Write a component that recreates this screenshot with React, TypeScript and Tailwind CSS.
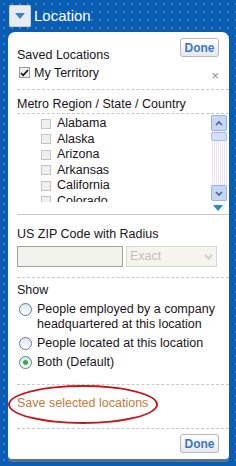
import { useState } from "react";

const states = ["Alabama", "Alaska", "Arizona", "Arkansas", "California", "Colorado"];

const DoneButton = () => (
  <button className="h-[19px] w-[39px] rounded-[3px] border border-[#b8b8b8] bg-[linear-gradient(#ffffff,#e6e9ee)] text-[12px] font-bold leading-none text-[#3a78c4]">
    Done
  </button>
);

const Radio = ({ checked }: { checked?: boolean }) => (
  <span className="mt-[1px] flex h-[13px] w-[13px] shrink-0 items-center justify-center rounded-full border border-[#5b7ba8] bg-[linear-gradient(#dfe4ea,#ffffff)]">
    {checked && <span className="h-[5px] w-[5px] rounded-full bg-[#2fae3c]" />}
  </span>
);

export default function App() {
  const [show] = useState(2);
  const options = [
    "People employed by a company headquartered at this location",
    "People located at this location",
    "Both (Default)",
  ];

  return (
    <div
      className="h-[466px] w-[236px] overflow-hidden bg-[#0a5db3] bg-[radial-gradient(#3088cf_0.7px,transparent_1px)] bg-[size:8px_8px] text-[12.5px] text-[#1b1320]"
      style={{ fontFamily: '"Liberation Sans", Arial, sans-serif' }}
    >
      {/* header */}
      <div className="flex h-[32px] items-center pl-[9px]">
        <div className="flex h-[22px] w-[22px] items-center justify-center rounded-[2px] bg-[#e8ebef] shadow-[inset_0_0_0_1px_#c9ced6]">
          <svg width="10" height="6" viewBox="0 0 10 6">
            <path d="M0 0h10L5 6z" fill="#2a86d6" />
          </svg>
        </div>
        <span className="ml-[3px] text-[15px] text-white">Location</span>
      </div>

      {/* panel */}
      <div className="ml-[8px] w-[221px] rounded-t-[7px] rounded-b-[4px] bg-white pb-[6px] pl-[9px] shadow-[0_3px_0_#57748f]">
        {/* saved */}
        <div className="relative pt-[16px]">
          <div className="absolute right-[10px] top-[6px]">
            <DoneButton />
          </div>
          <div className="leading-[15px]">Saved Locations</div>
          <div className="flex items-center gap-[4px] pl-[2px] leading-[16px]">
            <span className="flex h-[11px] w-[11px] items-center justify-center border border-[#9a9a9a] bg-[#eeeeee]">
              <svg width="9" height="8" viewBox="0 0 9 8">
                <path d="M1 4l2.2 2.3L8 1" stroke="#111" strokeWidth="1.6" fill="none" />
              </svg>
            </span>
            <span>My Territory</span>
            <span className="ml-auto mr-[10px] mt-[6px] text-[13px] leading-none text-[#8a8a8a]">×</span>
          </div>
          <div className="mt-[7px] border-t border-dashed border-[#c8c8c8]" />
        </div>

        {/* metro region */}
        <div className="pt-[7px]">
          <div className="leading-[15px]">Metro Region / State / Country</div>
          <div className="mt-[1px] border-t border-dashed border-[#c8c8c8]" />
          <div className="flex h-[88px] overflow-hidden pr-[2px]">
            <div className="flex-1 pl-[24px] pt-[2px]">
              {states.map((s) => (
                <div key={s} className="flex h-[15.5px] items-center gap-[6px]">
                  <span className="h-[10px] w-[10px] border border-[#c4c4c4] bg-[#f0f0f0]" />
                  <span>{s}</span>
                </div>
              ))}
            </div>
            <div className="mt-[1px] flex h-[86px] w-[16px] flex-col bg-[repeating-linear-gradient(90deg,#ffffff_0_1px,#e9e6f0_1px_2px)]">
              <div className="flex h-[16px] items-center justify-center rounded-[2px] border border-[#9cb4e0] bg-[#c6d6f7]">
                <svg width="8" height="5" viewBox="0 0 8 5">
                  <path d="M1 4l3-3 3 3" stroke="#4c5f86" strokeWidth="1.6" fill="none" />
                </svg>
              </div>
              <div className="mt-[1px] h-[9px] rounded-[2px] border border-[#a8bde6] bg-[#d4e0f8]" />
              <div className="flex-1" />
              <div className="flex h-[16px] items-center justify-center rounded-[2px] border border-[#9cb4e0] bg-[#c6d6f7]">
                <svg width="8" height="5" viewBox="0 0 8 5">
                  <path d="M1 1l3 3 3-3" stroke="#4c5f86" strokeWidth="1.6" fill="none" />
                </svg>
              </div>
            </div>
          </div>
          <div className="flex h-[12px] justify-end pr-[6px] pt-[3px]">
            <svg width="10" height="6" viewBox="0 0 10 6">
              <path d="M0 0h10L5 6z" fill="#2a86d6" />
            </svg>
          </div>
          <div className="border-t border-[#c8c8c8]" />
        </div>

        {/* zip */}
        <div className="pt-[12px]">
          <div className="leading-[15px]">US ZIP Code with Radius</div>
          <div className="mt-[4px] flex gap-[3px]">
            <div className="h-[21px] w-[106px] border border-[#a0a0a0] bg-[#f3f3ee]" />
            <div className="flex h-[21px] w-[91px] items-center justify-between border border-[#d6d6cc] bg-[#f5f5ee] px-[3px]">
              <span className="text-[#c0c0b8]">Exact</span>
              <svg width="9" height="9" viewBox="0 0 9 9">
                <path d="M1 3l3.5 3.5L8 3" stroke="#cfcfc6" strokeWidth="2" fill="none" />
              </svg>
            </div>
          </div>
          <div className="mt-[10px] border-t border-dashed border-[#c8c8c8]" />
        </div>

        {/* show */}
        <div className="pt-[5px]">
          <div className="leading-[15px]">Show</div>
          <div className="mt-[4px] flex flex-col gap-[4px] pl-[2px]">
            {options.map((o, i) => (
              <div key={o} className="flex gap-[5px] leading-[15px]">
                <Radio checked={i === show} />
                <span className="w-[185px]">{o}</span>
              </div>
            ))}
          </div>
          <div className="mt-[14px] border-t border-dashed border-[#c8c8c8]" />
        </div>

        {/* save */}
        <div className="relative h-[43px]">
          <div className="absolute left-[-9px] top-[0px] h-[39px] w-[150px] rounded-[50%] border-[2px] border-[#c8161b]" />
          <div className="pt-[11px] leading-[15px] text-[#c57a3a]">Save selected locations</div>
        </div>
        <div className="border-t border-dashed border-[#c8c8c8]" />
        <div className="flex justify-end pr-[10px] pt-[5px]">
          <DoneButton />
        </div>
      </div>
    </div>
  );
}
